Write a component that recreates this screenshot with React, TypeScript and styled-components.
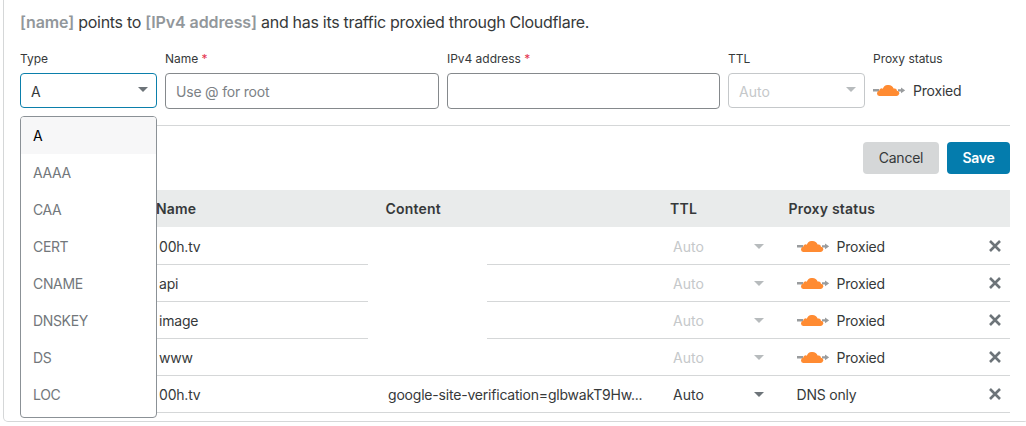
import React from 'react';
import styled, { createGlobalStyle } from 'styled-components';

const GlobalStyle = createGlobalStyle`
  * { box-sizing: border-box; }
  html { overflow: hidden; }
  body {
    margin: 0;
    background: #fff;
    color: #36393a;
    font: 14px/20px Inter, 'Liberation Sans', sans-serif;
    letter-spacing: -0.2px;
    overflow: hidden;
  }
`;

const Panel = styled.main`
  width: 1026px;
  height: 422px;
  margin-left: 3px;
  padding: 12px 18px 0 16px;
  border: 1px solid #d5d7d8;
  border-top: 0;
  border-radius: 0 0 5px 5px;
`;

const Summary = styled.p`
  margin: 0;
  font-size: 16px;
  line-height: 20px;
  letter-spacing: -0.3px;
  white-space: nowrap;
`;

const Token = styled.span`
  color: #92979b;
  font-weight: 600;
  letter-spacing: -0.11px;
`;

const Form = styled.div`
  display: grid;
  grid-template-columns: 137px 274px 273px 137px 1fr;
  column-gap: 8px;
  height: 75px;
  margin-top: 19px;
  border-bottom: 1px solid #d5d7d8;
`;

const Field = styled.div`
  position: relative;
`;

const Label = styled.div`
  margin-bottom: 7px;
  font-size: 12px;
  line-height: 15px;
  letter-spacing: -0.03px;
`;

const Required = styled.span`
  color: #e4344f;
`;

const Select = styled.div<{ $state: 'active' | 'disabled' }>`
  display: flex;
  align-items: center;
  justify-content: space-between;
  height: 35px;
  padding: 3px 8px 0 10px;
  border: 1px solid ${p => (p.$state === 'active' ? '#0b7fab' : '#c5c8ca')};
  border-radius: 4px;
  letter-spacing: 0;
  color: ${p => (p.$state === 'active' ? '#36393a' : '#c5c8ca')};
`;

const Input = styled.div`
  height: 36px;
  padding: 8px 10px;
  border: 1px solid #85898c;
  border-radius: 4px;
  color: #7c8185;
`;

const Arrow = styled.svg<{ $muted?: boolean }>`
  display: block;
  width: 10px;
  height: 5px;
  margin-bottom: 5px;
  fill: ${p => (p.$muted ? '#b7bbbd' : '#6d7479')};
`;

const Menu = styled.div`
  position: absolute;
  z-index: 2;
  top: 65px;
  left: 0;
  width: 137px;
  height: 302px;
  overflow: hidden;
  border: 1px solid #8b9196;
  border-radius: 4px;
  background: #fff;
`;

const Option = styled.div<{ $active?: boolean }>`
  height: 37px;
  padding: 9px 12px;
  letter-spacing: -0.35px;
  color: ${p => (p.$active ? '#000' : '#72777b')};
  background: ${p => (p.$active ? '#f7f7f8' : '#fff')};
`;

const Proxy = styled.div`
  display: flex;
  align-items: center;
  gap: 8px;
`;

const FormProxy = styled(Proxy)`
  height: 35px;
  padding-top: 1px;
`;

const Actions = styled.div`
  display: flex;
  justify-content: flex-end;
  gap: 8px;
  padding: 16px 0;
`;

const Button = styled.button<{ $primary?: boolean }>`
  width: ${p => (p.$primary ? 63 : 76)}px;
  height: 32px;
  padding: 0;
  border: 0;
  border-radius: 4px;
  font: inherit;
  font-weight: ${p => (p.$primary ? 600 : 400)};
  letter-spacing: -0.25px;
  color: ${p => (p.$primary ? '#fff' : '#36393a')};
  background: ${p => (p.$primary ? '#047cad' : '#d5d7d8')};
`;

const Row = styled.div`
  display: grid;
  grid-template-columns: 139px 229px 285px 123.5px 1fr 21.5px;
  align-items: center;
  height: 37px;
  padding-top: 2px;
  border-bottom: 1px solid #d5d7d8;
`;

const HeadRow = styled(Row)`
  margin-bottom: 1px;
  padding-top: 1px;
  grid-template-columns: 136px 229.5px 284.5px 118.5px 1fr;
  border-bottom: 0;
  background: #e9ebeb;
  font-weight: 600;
  letter-spacing: 0.2px;
`;

const Cell = styled.div`
  white-space: nowrap;
`;

const BlankContent = styled.div`
  width: 119px;
  height: 35px;
  margin: 0 0 -1px -20px;
  align-self: start;
  background: #fff;
`;

const Ttl = styled.div<{ $muted: boolean }>`
  display: flex;
  align-items: center;
  justify-content: space-between;
  width: 91px;
  letter-spacing: 0;
  color: ${p => (p.$muted ? '#c5c8ca' : '#36393a')};

  ${Arrow} {
    margin-bottom: 1px;
  }
`;

const Remove = styled.svg`
  display: block;
  width: 12px;
  height: 12px;
  margin-bottom: 2px;
  stroke: #6d7479;
  stroke-width: 2.6;
`;

const Caret = ({ muted }: { muted?: boolean }) => (
  <Arrow viewBox="0 0 10 5" $muted={muted}><path d="M0 0h10L5 5z" /></Arrow>
);

const Cloud = () => (
  <svg width="32" height="12" viewBox="0 0 32 12">
    <path d="M0 4h6v2.5H0zM25 4.2h3V2.6L32.2 5.4 28 8.2V6.5h-3z" fill="#999c9e" />
    <path d="M6.2 11A2.5 2.5 0 0 1 4 8.5a2.7 2.7 0 0 1 2.2-2.7 2.4 2.4 0 0 1 3.6-2.1A5.6 5.6 0 0 1 15.4 0a5.5 5.5 0 0 1 5.2 3.6 2.7 2.7 0 0 1 3.4 2.2 2.6 2.6 0 0 1 2.4 2.4C26 9.5 25 11 23.4 11z" fill="#ff8b32" />
  </svg>
);

const types = ['A', 'AAAA', 'CAA', 'CERT', 'CNAME', 'DNSKEY', 'DS', 'LOC'];

const records = [
  { name: '00h.tv', proxied: true, blank: true },
  { name: 'api', proxied: true, blank: true },
  { name: 'image', proxied: true, blank: true },
  { name: 'www', proxied: true },
  { name: '00h.tv', proxied: false, content: 'google-site-verification=glbwakT9Hw...' },
];

export default function App() {
  return (
    <>
      <GlobalStyle />
      <Panel>
        <Summary>
          <Token>[name]</Token> points to <Token>[IPv4 address]</Token> and has its traffic proxied through Cloudflare.
        </Summary>
        <Form>
          <Field>
            <Label>Type</Label>
            <Select $state="active">A<Caret /></Select>
            <Menu>
              {types.map(t => <Option key={t} $active={t === 'A'}>{t}</Option>)}
            </Menu>
          </Field>
          <Field>
            <Label>Name <Required>*</Required></Label>
            <Input>Use @ for root</Input>
          </Field>
          <Field>
            <Label>IPv4 address <Required>*</Required></Label>
            <Input />
          </Field>
          <Field>
            <Label>TTL</Label>
            <Select $state="disabled">Auto<Caret muted /></Select>
          </Field>
          <Field>
            <Label>Proxy status</Label>
            <FormProxy><Cloud />Proxied</FormProxy>
          </Field>
        </Form>
        <Actions>
          <Button>Cancel</Button>
          <Button $primary>Save</Button>
        </Actions>
        <HeadRow>
          <Cell />
          <Cell>Name</Cell>
          <Cell>Content</Cell>
          <Cell>TTL</Cell>
          <Cell>Proxy status</Cell>
        </HeadRow>
        {records.map((r, i) => (
          <Row key={i}>
            <Cell />
            <Cell>{r.name}</Cell>
            {r.blank ? <BlankContent /> : <Cell>{r.content}</Cell>}
            <Ttl $muted={r.proxied}>Auto<Caret muted={r.proxied} /></Ttl>
            {r.proxied ? <Proxy><Cloud />Proxied</Proxy> : <Cell>DNS only</Cell>}
            <Remove viewBox="0 0 12 12"><path d="M1 1l10 10M11 1L1 11" /></Remove>
          </Row>
        ))}
      </Panel>
    </>
  );
}
